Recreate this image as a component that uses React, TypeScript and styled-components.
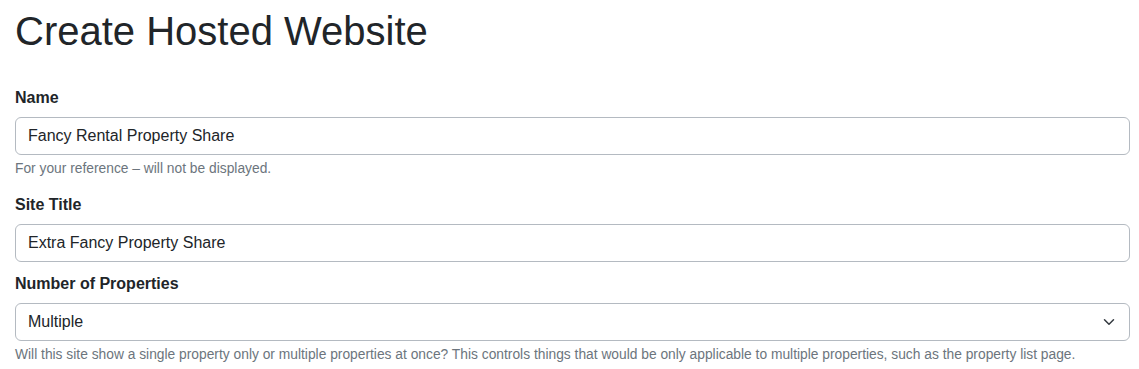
import React from "react";
import styled, { createGlobalStyle } from "styled-components";

const GlobalStyle = createGlobalStyle`
  html, body {
    margin: 0;
    padding: 0;
    background: #ffffff;
  }
  body {
    font-family: "Liberation Sans", Arial, sans-serif;
    font-size: 16px;
    line-height: 1.5;
    color: #212529;
  }
  *, *::before, *::after { box-sizing: border-box; }
`;

const Page = styled.div`
  padding: 7px 9px 0 15px;
`;

const Title = styled.h1`
  margin: 0 0 31px 0;
  font-size: 40px;
  font-weight: 400;
  line-height: 1.2;
  color: #212529;
`;

const Form = styled.form`
  display: flex;
  flex-direction: column;
`;

const Field = styled.div<{ $gap: number }>`
  display: flex;
  flex-direction: column;
  margin-bottom: ${(p) => p.$gap}px;
`;

const Label = styled.label`
  display: block;
  margin-bottom: 7px;
  font-size: 16px;
  font-weight: 700;
  line-height: 24px;
  color: #212529;
`;

const Input = styled.input`
  display: block;
  width: 100%;
  height: 38px;
  padding: 6px 12px;
  font-family: inherit;
  font-size: 16px;
  line-height: 24px;
  color: #212529;
  background: #ffffff;
  border: 1px solid #b4bac1;
  border-radius: 6px;
  outline: none;
`;

const SelectWrap = styled.div`
  position: relative;
  width: 100%;
`;

const Select = styled.select`
  display: block;
  width: 100%;
  height: 38px;
  padding: 6px 36px 6px 12px;
  font-family: inherit;
  font-size: 16px;
  line-height: 24px;
  color: #212529;
  background: #ffffff;
  border: 1px solid #b4bac1;
  border-radius: 6px;
  outline: none;
  appearance: none;
  -webkit-appearance: none;
`;

const Chevron = styled.svg`
  position: absolute;
  right: 15px;
  top: 13px;
  width: 12px;
  height: 12px;
  pointer-events: none;
`;

const Help = styled.div`
  margin-top: 3px;
  font-size: 13.8px;
  line-height: 21px;
  color: #6c757d;
`;

export default function App() {
  return (
    <>
      <GlobalStyle />
      <Page>
        <Title>Create Hosted Website</Title>
        <Form onSubmit={(e) => e.preventDefault()}>
          <Field $gap={14}>
            <Label htmlFor="name">Name</Label>
            <Input id="name" type="text" defaultValue="Fancy Rental Property Share" />
            <Help>For your reference – will not be displayed.</Help>
          </Field>
          <Field $gap={10}>
            <Label htmlFor="title">Site Title</Label>
            <Input id="title" type="text" defaultValue="Extra Fancy Property Share" />
          </Field>
          <Field $gap={0}>
            <Label htmlFor="count">Number of Properties</Label>
            <SelectWrap>
              <Select id="count" defaultValue="multiple">
                <option value="single">Single</option>
                <option value="multiple">Multiple</option>
              </Select>
              <Chevron viewBox="0 0 16 16" aria-hidden="true">
                <path
                  d="m2 5 6 6 6-6"
                  fill="none"
                  stroke="#343a40"
                  strokeWidth="2"
                  strokeLinecap="round"
                  strokeLinejoin="round"
                />
              </Chevron>
            </SelectWrap>
            <Help>
              Will this site show a single property only or multiple properties at once? This controls things that would be only applicable to multiple properties, such as the property list page.
            </Help>
          </Field>
        </Form>
      </Page>
    </>
  );
}
